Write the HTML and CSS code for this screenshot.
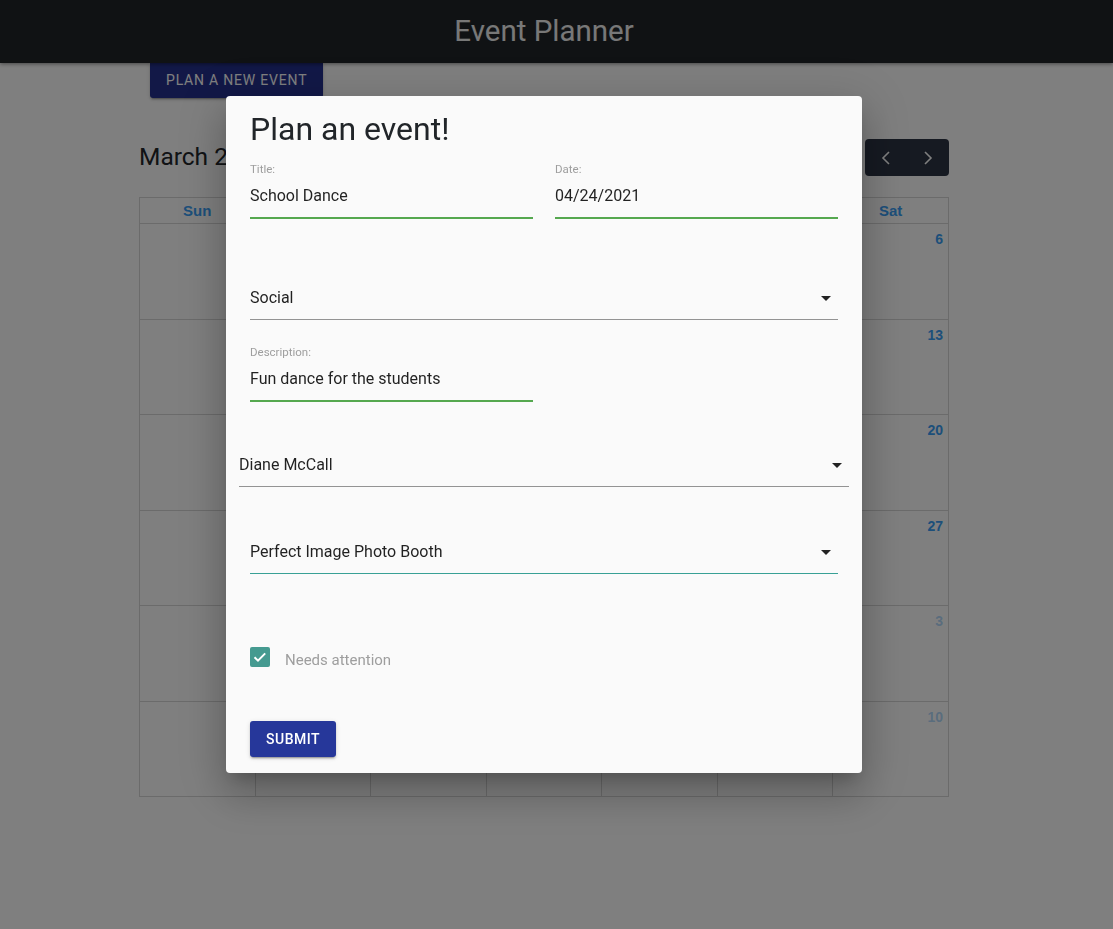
FILE: index.html
```html
<!DOCTYPE html>
<html lang="en">
<head>
<meta charset="utf-8">
<title>Event Planner</title>
<link rel="stylesheet" href="styles.css">
</head>
<body>
<header class="navbar"><h1 class="brand">Event Planner</h1></header>
<main class="page">
  <button class="btn btn-plan">Plan a new event</button>
  <section class="calendar">
    <div class="toolbar">
      <h2 class="cal-title">March 2021</h2>
      <div class="nav-group">
        <button class="nav-btn" aria-label="prev"><svg width="10" height="14" viewBox="0 0 10 14"><polyline points="8,1 2,7 8,13" fill="none" stroke="#fff" stroke-width="1.6"/></svg></button>
        <button class="nav-btn" aria-label="next"><svg width="10" height="14" viewBox="0 0 10 14"><polyline points="2,1 8,7 2,13" fill="none" stroke="#fff" stroke-width="1.6"/></svg></button>
      </div>
    </div>
    <table class="month">
      <thead>
        <tr><th>Sun</th><th>Mon</th><th>Tue</th><th>Wed</th><th>Thu</th><th>Fri</th><th>Sat</th></tr>
      </thead>
      <tbody>
        <tr><td class="other">28</td><td>1</td><td>2</td><td>3</td><td>4</td><td>5</td><td>6</td></tr>
        <tr><td>7</td><td>8</td><td>9</td><td>10</td><td>11</td><td>12</td><td>13</td></tr>
        <tr><td>14</td><td>15</td><td>16</td><td>17</td><td>18</td><td>19</td><td>20</td></tr>
        <tr><td>21</td><td>22</td><td>23</td><td>24</td><td>25</td><td>26</td><td>27</td></tr>
        <tr><td>28</td><td>29</td><td>30</td><td>31</td><td class="other">1</td><td class="other">2</td><td class="other">3</td></tr>
        <tr><td class="other">4</td><td class="other">5</td><td class="other">6</td><td class="other">7</td><td class="other">8</td><td class="other">9</td><td class="other">10</td></tr>
      </tbody>
    </table>
  </section>
</main>

<div class="backdrop"></div>

<div class="modal" role="dialog">
  <h2 class="modal-title">Plan an event!</h2>
  <div class="row">
    <label class="field">
      <span class="field-label">Title:</span>
      <input class="text-input valid" type="text" value="School Dance">
    </label>
    <label class="field">
      <span class="field-label">Date:</span>
      <input class="text-input valid" type="text" value="04/24/2021">
    </label>
  </div>
  <div class="select select-first">
    <span>Social</span>
    <svg class="arrow" width="24" height="24" viewBox="0 0 24 24"><path d="M7 10l5 5 5-5z"/></svg>
  </div>
  <label class="field field-desc">
    <span class="field-label">Description:</span>
    <input class="text-input valid" type="text" value="Fun dance for the students">
  </label>
  <div class="select select-wide">
    <span>Diane McCall</span>
    <svg class="arrow" width="24" height="24" viewBox="0 0 24 24"><path d="M7 10l5 5 5-5z"/></svg>
  </div>
  <div class="select select-focused">
    <span>Perfect Image Photo Booth</span>
    <svg class="arrow" width="24" height="24" viewBox="0 0 24 24"><path d="M7 10l5 5 5-5z"/></svg>
  </div>
  <div class="check-row">
    <span class="checkbox"><svg width="20" height="20" viewBox="0 0 20 20"><polyline points="4.5,10.2 8,13.6 15.2,6.4" fill="none" stroke="#fff" stroke-width="2"/></svg></span>
    <span class="check-label">Needs attention</span>
  </div>
  <button class="btn btn-submit">Submit</button>
</div>
</body>
</html>
```
FILE: styles.css
```css
html, body {
  margin: 0;
  height: 929px;
  overflow: hidden;
}
body {
  font-family: Roboto, "Liberation Sans", Arial, sans-serif;
  background: #fff;
  position: relative;
}

.navbar {
  height: 63px;
  box-sizing: border-box;
  padding-right: 25px;
  background: #212529;
  display: flex;
  align-items: center;
  justify-content: center;
  position: relative;
  z-index: 1;
  box-shadow: 0 1px 4px rgba(0, 0, 0, 0.45);
}
.brand {
  margin: 0;
  font-weight: 400;
  font-size: 29.5px;
  line-height: 1;
  color: #f0f0f0;
}

.page {
  width: 810px;
  margin-left: 139px;
}

.btn {
  display: block;
  border: 0;
  padding: 0 16px;
  background: #26379a;
  color: #fff;
  font-family: Roboto, "Liberation Sans", sans-serif;
  font-weight: 500;
  font-size: 14px;
  letter-spacing: 0.5px;
  text-transform: uppercase;
  cursor: pointer;
  box-shadow: 0 3px 1px -2px rgba(0,0,0,.2), 0 2px 2px 0 rgba(0,0,0,.14), 0 1px 5px 0 rgba(0,0,0,.12);
}
.btn-plan {
  margin-left: 11px;
  height: 35px;
  line-height: 35px;
  font-weight: 400;
  letter-spacing: 0.8px;
  background: #24318f;
  border-radius: 0 0 3px 3px;
}

.toolbar {
  margin-top: 41px;
  margin-bottom: 21px;
  height: 37px;
  display: flex;
  align-items: center;
  justify-content: space-between;
}
.cal-title {
  margin: 0;
  font-weight: 400;
  font-size: 24.5px;
  line-height: 1;
  color: #23272b;
}
.nav-group {
  display: flex;
  background: #2c3444;
  border-radius: 4px;
  overflow: hidden;
}
.nav-btn {
  width: 42px;
  height: 37px;
  padding: 0;
  border: 0;
  background: transparent;
  display: flex;
  align-items: center;
  justify-content: center;
}

.month {
  width: 810px;
  height: 600px;
  border-collapse: collapse;
  table-layout: fixed;
  font-family: "Liberation Sans", Arial, sans-serif;
}
.month th,
.month td {
  border: 1px solid #d6d6d6;
}
.month thead tr {
  height: 26px;
}
.month th {
  padding: 0;
  font-weight: 700;
  font-size: 15px;
  color: #3a9ef5;
}
.month tbody tr {
  height: 95.4px;
}
.month td {
  vertical-align: top;
  text-align: right;
  padding: 7px 5px 0 0;
  font-weight: 700;
  font-size: 14px;
  line-height: 16px;
  color: #3a9ef5;
}
.month td.other {
  color: rgba(58, 158, 245, 0.4);
}

.backdrop {
  position: fixed;
  inset: 0;
  background: rgba(0, 0, 0, 0.5);
  z-index: 2;
}

.modal {
  position: absolute;
  top: 96px;
  left: 226px;
  z-index: 3;
  width: 636px;
  box-sizing: border-box;
  padding: 15px 24px 16px;
  background: #fafafa;
  border-radius: 4px;
  display: flex;
  flex-direction: column;
  align-items: stretch;
  box-shadow: 0 11px 15px -7px rgba(0,0,0,.2), 0 24px 38px 3px rgba(0,0,0,.14), 0 9px 46px 8px rgba(0,0,0,.12);
}
.modal-title {
  margin: 0;
  font-weight: 400;
  font-size: 32px;
  line-height: 36px;
  color: #212529;
}

.row {
  display: flex;
  gap: 22px;
  margin-top: 15px;
}
.field {
  display: block;
  flex: 1;
}
.field-label {
  display: block;
  height: 14px;
  font-size: 11.5px;
  line-height: 14px;
  color: #9e9e9e;
}
.text-input {
  display: block;
  width: 100%;
  box-sizing: border-box;
  height: 42px;
  margin: 0;
  padding: 0 0 3px;
  border: 0;
  border-bottom: 1px solid #9e9e9e;
  background: transparent;
  outline: none;
  font-family: Roboto, "Liberation Sans", sans-serif;
  font-size: 16px;
  color: rgba(0, 0, 0, 0.87);
}
.text-input.valid {
  border-bottom-color: #55a84f;
  box-shadow: 0 1px 0 0 #55a84f;
}
.field-desc {
  flex: none;
  width: 283px;
  margin-top: 25px;
}

.select {
  display: flex;
  align-items: center;
  justify-content: space-between;
  height: 42px;
  box-sizing: border-box;
  padding-bottom: 2px;
  border-bottom: 1px solid #939393;
  font-size: 16px;
  color: rgba(0, 0, 0, 0.87);
}
.select-first {
  margin-top: 60px;
}
.select-wide {
  margin: 44px -11px 0;
}
.select-focused {
  margin-top: 45px;
  border-bottom-color: #38a095;
}
.arrow {
  fill: #222;
  flex: none;
}

.check-row {
  display: flex;
  align-items: flex-start;
  height: 20px;
  margin-top: 73px;
}
.checkbox {
  width: 20px;
  height: 20px;
  border-radius: 2px;
  background: #459a90;
  display: block;
}
.checkbox svg {
  display: block;
}
.check-label {
  margin-left: 15px;
  font-size: 15px;
  line-height: 26px;
  color: #9e9e9e;
}

.btn-submit {
  align-self: flex-start;
  margin-top: 54px;
  height: 36px;
  line-height: 36px;
  border-radius: 3px;
}
```
